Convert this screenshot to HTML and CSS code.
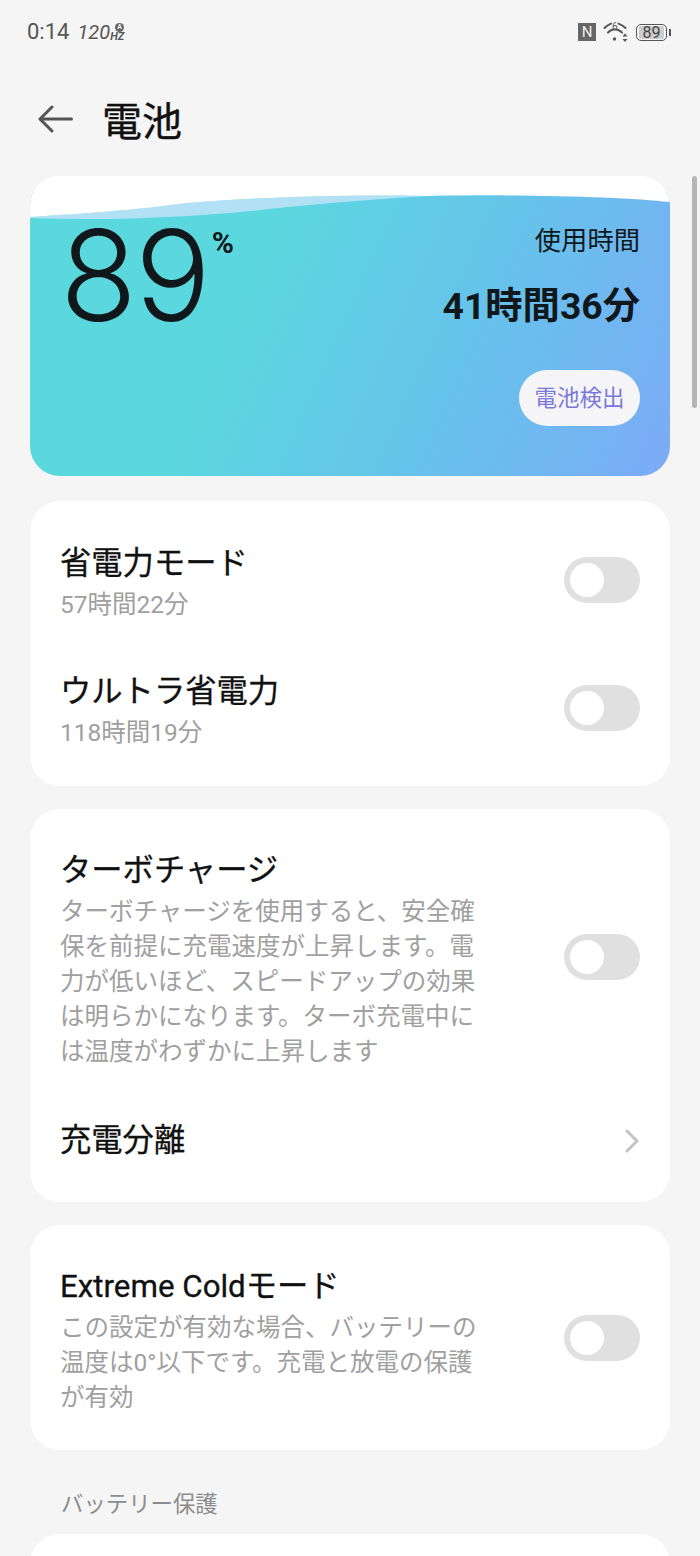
FILE: index.html
```html
<!DOCTYPE html>
<html lang="ja">
<head>
    <meta charset="UTF-8">
    <title>電池</title>
    <link rel="stylesheet" href="styles.css">
</head>
<body>
    <div class="statusbar">
        <div class="status-left">
            <span class="clock">0:14</span>
            <span class="rate">120<span class="rate-unit"><span class="rate-a">A</span>HZ</span></span>
        </div>
        <div class="status-right">
            <span class="nfc">N</span>
            <span class="wifi">
                <svg width="28" height="24" viewBox="0 0 28 24" fill="none" stroke="#555" stroke-width="2" stroke-linecap="round">
                    <path d="M1.500 8C3.500 6 5.800 4.500 8 3.600"/>
                    <path d="M15.500 3.600C18 4.500 20.500 6 22.500 8"/>
                    <path d="M5 12.500C6.500 11 8 10 10 9.600C11.500 9.300 13 9.300 14.500 9.700C16 10.200 17.500 11 19 12.500"/>
                    <circle cx="11.500" cy="19" r="1.700" fill="#555" stroke="none"/>
                    <path d="M22 13.500l2.500 3h-5zM22 22l2.500-3h-5z" fill="#555" stroke="none"/>
                </svg>
                <span class="wifi-num">6</span>
            </span>
            <span class="battery"><span class="battery-num">89</span></span>
        </div>
    </div>

    <div class="titlebar">
        <svg class="back" width="36" height="30" viewBox="0 0 36 30" fill="none" stroke="#555" stroke-width="3" stroke-linecap="round" stroke-linejoin="round">
            <path d="M33.500 15H3"/>
            <path d="M14 3L2 15L14 27"/>
        </svg>
        <h1>電池</h1>
    </div>

    <div class="scrollbar"></div>

    <div class="hero card">
        <svg class="wave" viewBox="0 0 640 60" preserveAspectRatio="none">
            <path d="M0 41C40 38 90 36 157 27C223 21 330 18 397 20C360 22 300 27 257 31C200 38 100 46 0 42Z" fill="#b2e1f6"/>
            <path d="M0 0H640V26C597 21 497 18 397 20C330 18 223 21 157 27C90 36 40 38 0 41Z" fill="#fff"/>
        </svg>
        <div class="level">
            <span class="level-num">89</span>
            <span class="level-unit">%</span>
        </div>
        <div class="usage">
            <div class="usage-label">使用時間</div>
            <div class="usage-time">41時間36分</div>
            <div class="detect">電池検出</div>
        </div>
    </div>

    <div class="card list list-first">
        <div class="row">
            <div class="row-text">
                <div class="row-title">省電力モード</div>
                <div class="row-sub">57時間22分</div>
            </div>
            <div class="switch"></div>
        </div>
        <div class="row">
            <div class="row-text">
                <div class="row-title">ウルトラ省電力</div>
                <div class="row-sub">118時間19分</div>
            </div>
            <div class="switch"></div>
        </div>
    </div>

    <div class="card list">
        <div class="row">
            <div class="row-text">
                <div class="row-title">ターボチャージ</div>
                <div class="row-sub">ターボチャージを使用すると、安全確保を前提に充電速度が上昇します。電力が低いほど、スピードアップの効果は明らかになります。ターボ充電中には温度がわずかに上昇します</div>
            </div>
            <div class="switch"></div>
        </div>
        <div class="row row-link">
            <div class="row-title">充電分離</div>
            <svg class="chevron" width="14" height="24" viewBox="0 0 14 24" fill="none" stroke="#c4c4c4" stroke-width="3" stroke-linecap="round" stroke-linejoin="round">
                <path d="M2 2L12 12L2 22"/>
            </svg>
        </div>
    </div>

    <div class="card list">
        <div class="row">
            <div class="row-text">
                <div class="row-title">Extreme Coldモード</div>
                <div class="row-sub">この設定が有効な場合、バッテリーの温度は0°以下です。充電と放電の保護が有効</div>
            </div>
            <div class="switch"></div>
        </div>
    </div>

    <div class="section-label">バッテリー保護</div>
    <div class="card stub"></div>
</body>
</html>
```

FILE: styles.css
```css
html, body {
    height: 1556px;
    overflow: hidden;
}

body {
    margin: 0;
    position: relative;
    background-color: #f5f5f5;
    font-family: Roboto, "Noto Sans CJK JP", sans-serif;
    color: #111;
}

/* status bar */
.statusbar {
    display: flex;
    justify-content: space-between;
    align-items: center;
    height: 24px;
    padding: 20px 33px 0 27px;
    color: #555;
}

.status-left,
.status-right {
    display: flex;
    align-items: center;
}

.clock {
    font-size: 22px;
    line-height: 24px;
}

.rate {
    display: flex;
    align-items: flex-end;
    margin-left: 8px;
    font-size: 20px;
    font-style: italic;
    line-height: 20px;
}

.rate-unit {
    display: flex;
    flex-direction: column;
    align-items: flex-end;
    font-size: 11px;
    font-weight: 700;
    line-height: 10px;
}

.rate-a {
    width: 9px;
    height: 9px;
    border-radius: 50%;
    background-color: #666;
    color: #f5f5f5;
    font-size: 7px;
    font-style: normal;
    line-height: 9px;
    text-align: center;
}

.nfc {
    width: 18px;
    height: 18px;
    background-color: #666;
    color: #eee;
    font-size: 15px;
    line-height: 18px;
    text-align: center;
}

.wifi {
    position: relative;
    display: flex;
    margin-left: 7px;
}

.wifi-num {
    position: absolute;
    top: 1px;
    left: 9px;
    font-size: 10px;
    line-height: 12px;
}

.battery {
    position: relative;
    width: 29px;
    height: 15px;
    margin-left: 5px;
    border: 1.500px solid #555;
    border-radius: 5px;
    font-size: 16px;
    text-align: center;
    color: #444;
}

.battery::after {
    content: "";
    position: absolute;
    top: 4px;
    right: -5px;
    width: 2px;
    height: 7px;
    background-color: #555;
}

.battery-num {
    display: block;
    margin: 1px 2px;
    background-color: #ccc;
    border-radius: 2px;
    line-height: 13px;
}

/* title */
.titlebar {
    display: flex;
    align-items: center;
    height: 60px;
    margin-top: 47px;
    padding-left: 38px;
}

.back {
    margin-bottom: 4px;
}

.titlebar h1 {
    margin: 4px 0 0 28px;
    font-size: 40px;
    font-weight: 400;
    line-height: 60px;
    -webkit-text-stroke: 0.400px #111;
}

.scrollbar {
    position: absolute;
    top: 176px;
    right: 3px;
    width: 5px;
    height: 232px;
    border-radius: 3px;
    background-color: #b5b5b5;
}

/* cards */
.card {
    margin: 0 30px;
    border-radius: 30px;
    background-color: #fff;
    overflow: hidden;
}

.hero {
    position: relative;
    display: flex;
    justify-content: space-between;
    height: 300px;
    margin-top: 25px;
    margin-bottom: 25px;
    background: linear-gradient(114deg, #5ad8dc 0%, #5ad8de 32%, #68c0ec 70%, #7cabf7 100%) no-repeat 0 16px / 100% 284px;
}

.wave {
    position: absolute;
    top: 0;
    left: 0;
    width: 100%;
    height: 60px;
}

.level {
    position: relative;
    display: flex;
    align-items: flex-start;
    padding: 36px 0 0 30px;
    color: #10181c;
}

.level-num {
    font-family: Inter, sans-serif;
    font-size: 126px;
    font-weight: 300;
    line-height: 126px;
    letter-spacing: -2px;
}

.level-unit {
    margin: 11px 0 0 3px;
    font-size: 30px;
    font-weight: 700;
    line-height: 40px;
}

.usage {
    position: relative;
    display: flex;
    flex-direction: column;
    align-items: flex-end;
    padding: 46px 30px 0 0;
    color: #10181c;
}

.usage-label {
    font-size: 26.300px;
    line-height: 38px;
}

.usage-time {
    margin-top: 26px;
    font-size: 37.300px;
    font-weight: 700;
    line-height: 40px;
}

.detect {
    margin-top: 44px;
    height: 56px;
    padding: 0 15.500px;
    border-radius: 28px;
    background-color: #f5f5f7;
    color: #7a78d8;
    font-size: 22.500px;
    line-height: 56px;
}

.list {
    margin-bottom: 23px;
    padding: 15px 30px 12px;
}

.list-first {
    padding: 16px 30px 13px;
}

.row {
    display: flex;
    justify-content: space-between;
    align-items: center;
    padding: 26.500px 0 23.500px;
}

.row-text {
    width: 420px;
}

.row-title {
    font-size: 31.300px;
    line-height: 40px;
    -webkit-text-stroke: 0.300px #111;
}

.row-sub {
    margin-top: 3px;
    color: #a0a0a0;
    font-size: 24.500px;
    line-height: 35px;
}

.row-link {
    padding: 29px 0;
}

.chevron {
    margin-right: 1px;
}

.switch {
    position: relative;
    width: 76px;
    height: 46px;
    margin-top: -6px;
    border-radius: 23px;
    background-color: #e0e0e0;
}

.switch::after {
    content: "";
    position: absolute;
    top: 6px;
    left: 6px;
    width: 34px;
    height: 34px;
    border-radius: 50%;
    background-color: #fff;
}

.section-label {
    margin: 38px 0 0 61px;
    color: #8c8c8c;
    font-size: 22.400px;
    line-height: 32px;
}

.stub {
    height: 60px;
    margin-top: 14px;
}
```
